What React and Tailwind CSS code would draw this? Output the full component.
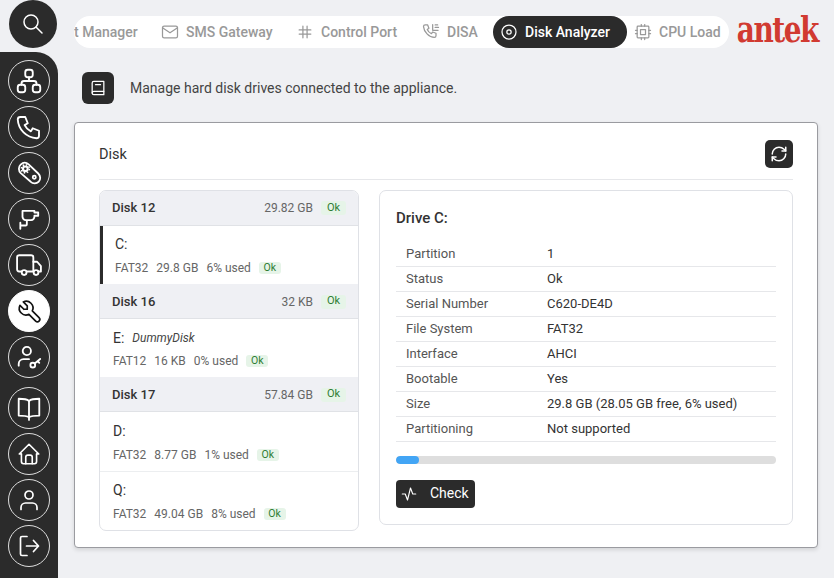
import React from "react";
import { TbSearch, TbSitemap, TbPhone, TbTool, TbHome, TbMail, TbCpu, TbBook2, TbActivity } from "react-icons/tb";
import { RefreshCw } from "lucide-react";

const base = { viewBox: "0 0 24 24", fill: "none", stroke: "currentColor", strokeWidth: 1.7, strokeLinecap: "round", strokeLinejoin: "round" };

const Belt = (p) => (
  <svg {...base} {...p}>
    <path d="M3.500 3.500c2.300-2.300 5.400-2.300 7.700-.2l9.200 8.700c2.300 2.300 2.500 5.700.5 7.800-2.200 2.300-5.600 2.200-8-.1L3.600 11.600c-2.300-2.300-2.400-5.800-.1-8.100z" />
    <circle cx="8" cy="7.500" r="3.300" fill="currentColor" stroke="none" />
    <circle cx="8" cy="7.500" r="3.900" strokeDasharray="1.500 1.560" strokeWidth="1.500" strokeLinecap="butt" />
    <circle cx="8" cy="7.500" r="1.200" fill="#2b2b2b" stroke="none" />
    <circle cx="16.600" cy="15.600" r="1.500" />
  </svg>
);
const Camera = (p) => (
  <svg {...base} {...p}>
    <path d="M6 4.500h11v1.500h3.500v3h-3.500v1a3 3 0 0 1-3 3H9a3 3 0 0 1-3-3z" />
    <path d="M10 13.500v3.500a1 1 0 0 1-1 1H4M4 15.500V21" />
  </svg>
);
const Truck = (p) => (
  <svg {...base} {...p}>
    <path d="M5 18H3a2 2 0 0 1-2-2V5a2 2 0 0 1 2-2h11a2 2 0 0 1 2 2v13h-6" />
    <path d="M16 9h3.500l3.500 4v5h-2.500" />
    <circle cx="7.500" cy="19" r="2.200" />
    <circle cx="18.500" cy="19" r="2.200" />
  </svg>
);
const UserKey = (p) => (
  <svg {...base} {...p}>
    <circle cx="10" cy="6.500" r="3.800" />
    <path d="M2.500 20v-1.500c0-2.500 2-4.500 4.500-4.500h5" />
    <circle cx="15.500" cy="19.500" r="2.200" />
    <path d="M17.300 18l5-4.200M20 15.800l1.500 1.600" />
  </svg>
);
const OpenBook = (p) => (
  <svg {...base} {...p}>
    <path d="M12 5.500C10 3.800 7 3.500 2.500 3.500v15.500c4.500 0 7.500.3 9.500 1.500 2-1.200 5-1.500 9.500-1.500V3.500c-4.500 0-7.500.3-9.500 2z" />
    <path d="M12 5.500V23" />
  </svg>
);
const User = (p) => (
  <svg {...base} {...p}>
    <circle cx="12" cy="7" r="4" />
    <path d="M4 21.500v-2c0-2.500 2-4.500 4.500-4.500h7c2.500 0 4.500 2 4.500 4.500v2" />
  </svg>
);
const Logout = (p) => (
  <svg {...base} {...p}>
    <path d="M10 2.500H5a1.500 1.500 0 0 0-1.500 1.500v16A1.500 1.500 0 0 0 5 21.500h5" />
    <path d="M9.500 12h12M16.500 6.500l5 5.500-5 5.500" />
  </svg>
);
const Hash = (p) => (
  <svg {...base} strokeWidth="1.500" {...p}>
    <path d="M9.500 5v14M14.500 5v14M5 9.500h14M5 14.500h14" />
  </svg>
);
const PhoneLines = (p) => (
  <svg {...base} strokeWidth="1.500" {...p}>
    <path d="M5 3.500h3l1.500 4-2 1.500c1 2.300 2.800 4.100 5 5l1.500-2 4 1.500v3c0 1.100-.9 2-2 2C9.500 18.500 3.500 11.500 3 5.500c0-1.100.9-2 2-2z" />
    <path d="M14 3v7h6.500M17 6.500h4M17 3.500h3" />
  </svg>
);
const Disc = (p) => (
  <svg {...base} strokeWidth="1.500" {...p}>
    <circle cx="12" cy="12" r="8.400" />
    <circle cx="12" cy="12" r="2.600" />
  </svg>
);

const tb = { strokeWidth: 1.5 };

const side = [
  [TbSitemap, "h-[30px] w-[30px]", tb],
  [TbPhone, "h-[30px] w-[30px]", tb],
  [Belt, "h-[25px] w-[25px]"],
  [Camera, "h-[26px] w-[26px]"],
  [Truck, "h-[26px] w-[26px]"],
  [TbTool, "h-[27px] w-[27px]", tb, true],
  [UserKey, "h-[26px] w-[26px]"],
  [OpenBook, "h-[26px] w-[26px]"],
  [TbHome, "h-[26px] w-[26px]", tb],
  [User, "h-[24px] w-[24px]"],
  [Logout, "h-[24px] w-[24px]"],
];

const tabs = [
  [null, "t Manager", "w-[78px]"],
  [TbMail, "SMS Gateway", "w-[135px] pl-[8px]", tb],
  [Hash, "Control Port", "w-[126px] pl-[8px]"],
  [PhoneLines, "DISA", "w-[80px] pl-[8px]"],
  [Disc, "Disk Analyzer", "w-[134px] pl-[6px] bg-[#2b2b2b] text-white"],
  [TbCpu, "CPU Load", "pl-[6px]", tb],
];

const Ok = () => (
  <span className="inline-flex h-[12px] w-[22px] items-center justify-center rounded-[3px] bg-[#e6f4e8] text-[10.500px] leading-[12px] text-[#2e7d32]">Ok</span>
);
const OkH = () => (
  <span className="inline-flex h-[14px] w-[25px] items-center justify-center rounded-[3px] bg-[#e6f4e8] text-[11px] text-[#2e7d32]">Ok</span>
);

const DiskHead = ({ name, size, low }) => (
  <div className={`flex h-[35px] items-center justify-between border-b border-[#e0e2e6] bg-[#eff0f4] px-[12px] ${low ? "pt-[1px]" : ""}`}>
    <span className="text-[13px] font-medium text-[#333]">{name}</span>
    <span className="flex items-center gap-[8px] text-[12px] text-[#666]">{size}<OkH /></span>
  </div>
);

const Part = ({ letter, note, fs, size, used, active, h, top = "pt-[8px]", gap = "mt-[7px]" }) => (
  <div className={`flex flex-col ${active ? "border-l-[3px] border-[#2b2b2b] pl-[12px]" : "pl-[13px]"} ${h} ${top}`}>
    <div className="flex h-[20px] items-center gap-[8px] text-[14px] text-[#333]">
      <span>{letter}</span>
      {note && <span className="text-[12px] italic text-[#444]">{note}</span>}
    </div>
    <div className={`${gap} flex items-center gap-[8px] text-[12px] leading-[14px] text-[#666]`}>
      <span>{fs}</span><span>{size}</span><span>{used}</span><Ok />
    </div>
  </div>
);

const rows = [
  ["Partition", "1"], ["Status", "Ok"], ["Serial Number", "C620-DE4D"], ["File System", "FAT32"],
  ["Interface", "AHCI"], ["Bootable", "Yes"], ["Size", "29.8 GB (28.05 GB free, 6% used)"], ["Partitioning", "Not supported"],
];

export default function App() {
  return (
    <div className="flex h-[578px] w-[834px] overflow-hidden bg-[#eff0f3] font-['Roboto',sans-serif]">
      <div className="flex w-[58px] shrink-0 flex-col">
        <button className="ml-[9px] flex h-[48px] w-[48px] items-center justify-center rounded-full bg-[#2b2b2b] text-white">
          <TbSearch className="h-[24px] w-[24px]" strokeWidth={1.5} />
        </button>
        <nav className="mt-[4px] flex flex-1 flex-col gap-[4px] rounded-tr-[22px] bg-[#2b2b2b] pl-[8px] pt-[8px]">
          {side.map(([I, cls, extra, active], i) => (
            <div key={i} className={`flex h-[42px] w-[42px] shrink-0 items-center justify-center rounded-full border ${active ? "border-white bg-white text-[#111]" : "border-[#ddd] text-white"} ${i === 7 ? "mt-[5px]" : ""}`}>
              <I className={cls} {...(extra || {})} />
            </div>
          ))}
        </nav>
      </div>

      <main className="flex min-w-0 flex-1 flex-col px-[16px]">
        <div className="mt-[16px] flex h-[32px] items-center">
          <div className="flex h-[32px] w-[656px] items-center overflow-hidden rounded-full bg-white text-[14px] font-medium text-[#999]">
            {tabs.map(([I, label, cls, extra], i) => (
              <div key={i} className={`flex h-[32px] shrink-0 items-center gap-[6px] rounded-full ${cls}`}>
                {I && <I className="h-[20px] w-[20px] shrink-0" {...(extra || {})} />}
                <span className="whitespace-nowrap">{label}</span>
              </div>
            ))}
          </div>
          <span className="ml-[8px] origin-[50%_78%] translate-y-[1px] scale-y-[1.27] font-['DejaVu_Serif',serif] text-[28px] font-bold leading-[32px] tracking-[-1.500px] text-[#d13a31]">antek</span>
        </div>

        <div className="ml-[8px] mt-[24px] flex h-[32px] items-center gap-[16px]">
          <div className="flex h-[32px] w-[32px] items-center justify-center rounded-[6px] bg-[#2b2b2b] text-white">
            <TbBook2 className="h-[20px] w-[20px]" strokeWidth={1.5} />
          </div>
          <span className="text-[14px] text-[#444]">Manage hard disk drives connected to the appliance.</span>
        </div>

        <section className="mt-[18px] h-[426px] rounded-[4px] border border-[#9a9ba0] bg-white px-[24px] shadow-[0_2px_4px_rgba(0,0,0,0.12)]">
          <div className="flex h-[57px] items-center justify-between border-b border-[#e6e7ea] pt-[5px]">
            <span className="pt-[2px] text-[14.500px] text-[#333]">Disk</span>
            <button className="flex h-[28px] w-[28px] items-center justify-center rounded-[5px] bg-[#2b2b2b] text-white">
              <RefreshCw className="h-[18px] w-[18px]" strokeWidth={2} />
            </button>
          </div>
          <div className="mt-[10px] flex gap-[20px]">
            <div className="h-[341px] w-[260px] overflow-hidden rounded-[7px] border border-[#dfe1e6]">
              <DiskHead name="Disk 12" size="29.82 GB" />
              <Part h="h-[58px]" letter="C:" fs="FAT32" size="29.8 GB" used="6% used" active />
              <DiskHead name="Disk 16" size="32 KB" low />
              <Part h="h-[58px]" top="pt-[9px]" gap="mt-[6px]" letter="E:" note="DummyDisk" fs="FAT12" size="16 KB" used="0% used" />
              <DiskHead name="Disk 17" size="57.84 GB" low />
              <div className="border-b border-[#eceef0]">
                <Part h="h-[59px]" top="pt-[9px]" letter="D:" fs="FAT32" size="8.77 GB" used="1% used" />
              </div>
              <Part h="h-[58px]" letter="Q:" fs="FAT32" size="49.04 GB" used="8% used" />
            </div>
            <div className="h-[335px] w-[414px] rounded-[7px] border border-[#dfe1e6] px-[16px]">
              <h2 className="mt-[17px] h-[20px] text-[15px] font-medium leading-[20px] text-[#333]">Drive C:</h2>
              <div className="mt-[14px]">
                {rows.map(([k, v]) => (
                  <div key={k} className="flex h-[25px] items-center border-b border-[#e6e7ea] text-[13px] text-[#333]">
                    <span className="w-[151px] pl-[10px] text-[#555]">{k}</span>
                    <span>{v}</span>
                  </div>
                ))}
              </div>
              <div className="mt-[14px] h-[8px] w-[380px] overflow-hidden rounded-full bg-[#dedede]">
                <div className="h-full w-[23px] rounded-full bg-[#42a5f5]" />
              </div>
              <button className="mt-[16px] flex h-[28px] w-[79px] items-center rounded-[4px] bg-[#2b2b2b] pl-[4px] text-[14px] text-white">
                <TbActivity className="h-[18px] w-[18px]" strokeWidth={1.5} />
                <span className="ml-[12px] pb-[2px]">Check</span>
              </button>
            </div>
          </div>
        </section>
      </main>
    </div>
  );
}
